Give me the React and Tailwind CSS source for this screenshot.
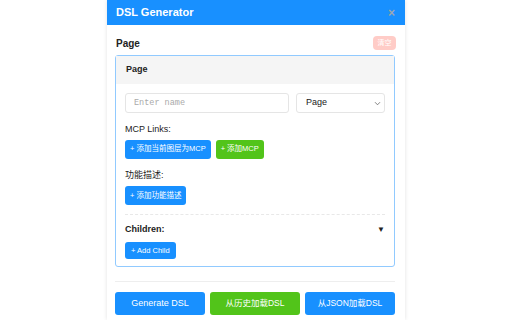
import React from 'react'

const font = { fontFamily: '"Liberation Sans", Arial, "Noto Sans CJK SC", sans-serif' }

export default function App() {
  return (
    <div className="w-[512px] h-[320px] bg-white overflow-hidden" style={font}>
      <div className="mx-auto w-[298px] h-[320px] bg-white shadow-[0_0_4px_rgba(0,0,0,0.12)] flex flex-col">
        <div className="h-[25px] bg-[#1890ff] flex items-center justify-between pl-[9px] pr-[10px] shrink-0">
          <span className="text-[11px] font-bold text-white">DSL Generator</span>
          <span className="text-[12px] font-bold text-[#9aa6b2] leading-none">×</span>
        </div>

        <div className="pl-2 pr-[10px]">
          <div className="flex items-center justify-between mt-[11px] h-[14px]">
            <span className="text-[10px] font-bold text-[#222] pl-px">Page</span>
            <span className="h-[14px] w-[23px] rounded-sm bg-[#ffccc7] text-white text-[7px] flex items-center justify-center mr-[-1px]">清空</span>
          </div>

          <div className="mt-[5px] h-[212px] border border-[#91caff] rounded-[3px] flex flex-col">
            <div className="h-[28px] bg-[#f5f5f5] flex items-center pl-[10px] shrink-0">
              <span className="text-[9px] font-bold text-[#222]">Page</span>
            </div>
            <div className="px-[9px] pt-[9px]">
              <div className="flex gap-[7px]">
                <div className="w-[164px] h-[20px] border border-[#e5e5e5] rounded-[3px] flex items-center pl-[8px]">
                  <span className="text-[8.5px] text-[#aaa]" style={{ fontFamily: '"Liberation Mono", monospace' }}>Enter name</span>
                </div>
                <div className="w-[89px] h-[20px] border border-[#e5e5e5] rounded-[3px] flex items-center justify-between pl-[9px] pr-[3px]">
                  <span className="text-[9px] text-[#222]">Page</span>
                  <svg width="7" height="5" viewBox="0 0 7 5" fill="none" stroke="#666" strokeWidth="0.8"><path d="M1 1.2 L3.5 3.8 L6 1.2" /></svg>
                </div>
              </div>

              <div className="mt-[10px] text-[9px] text-[#222]">MCP Links:</div>
              <div className="flex gap-[5px] mt-[3px]">
                <span className="h-[19px] px-[5px] rounded-[3px] bg-[#1890ff] text-white text-[7.5px] flex items-center">+ 添加当前图层为MCP</span>
                <span className="h-[19px] px-[5px] rounded-[3px] bg-[#52c41a] text-white text-[7.5px] flex items-center">+ 添加MCP</span>
              </div>

              <div className="mt-[10px] text-[9px] text-[#222]">功能描述:</div>
              <div className="flex mt-[4px]">
                <span className="h-[19px] px-[5px] rounded-[3px] bg-[#1890ff] text-white text-[7.5px] flex items-center">+ 添加功能描述</span>
              </div>

              <div className="mt-[9px] border-t border-dashed border-[#e8e8e8]"></div>

              <div className="flex items-center justify-between mt-[8px] h-[14px] pr-0">
                <span className="text-[9px] font-bold text-[#222]">Children:</span>
                <span className="text-[8px] text-[#222]">▼</span>
              </div>
              <div className="flex mt-[5px]">
                <span className="h-[17px] px-[6px] rounded-[3px] bg-[#1890ff] text-white text-[7.5px] flex items-center">+ Add Child</span>
              </div>
            </div>
          </div>

          <div className="mt-[14px] border-t border-[#eee]"></div>

          <div className="grid grid-cols-3 gap-[5px] mt-[10px]">
            <span className="h-[23px] rounded-[3px] bg-[#1890ff] text-white text-[9px] flex items-center justify-center">Generate DSL</span>
            <span className="h-[23px] rounded-[3px] bg-[#52c41a] text-white text-[8.5px] flex items-center justify-center">从历史加载DSL</span>
            <span className="h-[23px] rounded-[3px] bg-[#1890ff] text-white text-[8.5px] flex items-center justify-center">从JSON加载DSL</span>
          </div>
        </div>
      </div>
    </div>
  )
}
